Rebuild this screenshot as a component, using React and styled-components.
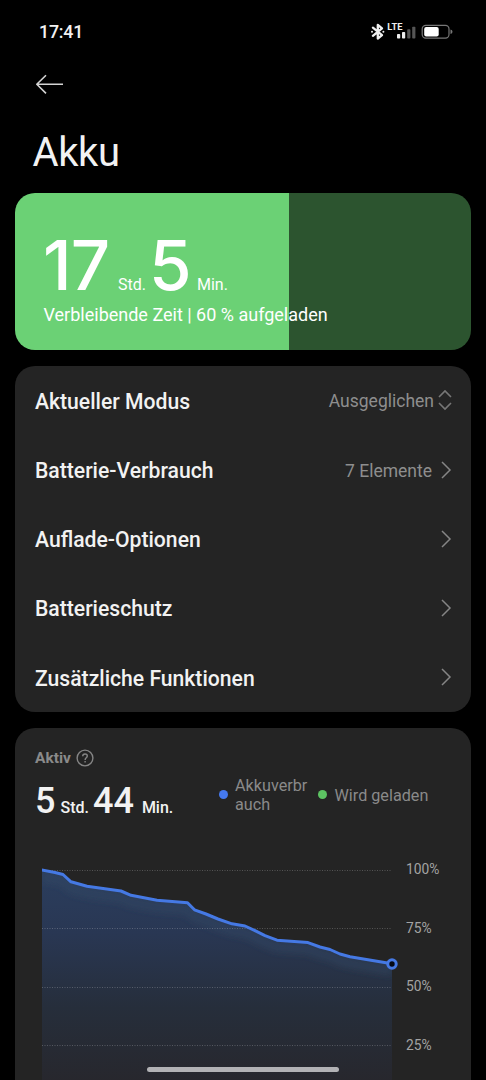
import React from "react";
import styled, { createGlobalStyle } from "styled-components";

const GlobalStyle = createGlobalStyle`
  *, *::before, *::after { box-sizing: border-box; }
  body { margin: 0; background: #000; }
`;

const Screen = styled.div`
  position: relative;
  width: 486px;
  height: 1080px;
  overflow: hidden;
  display: flex;
  flex-direction: column;
  background: #000;
  color: #f2f2f2;
  font-family: Roboto, "Liberation Sans", sans-serif;
`;

const StatusBar = styled.header`
  display: flex;
  align-items: center;
  justify-content: space-between;
  height: 64px;
  flex: none;
  padding: 0 32px 0 39px;
`;

const Clock = styled.span`
  font-size: 17.8px;
  font-weight: 500;
  line-height: 20px;
  letter-spacing: -0.2px;
`;

const StatusIcons = styled.svg`
  display: block;
  flex: none;
`;

const NavBar = styled.nav`
  display: flex;
  align-items: center;
  height: 40px;
  flex: none;
  padding-left: 35px;
`;

const BackButton = styled.button`
  display: flex;
  padding: 0;
  border: 0;
  background: none;
`;

const Title = styled.h1`
  margin: 25px 0 0 32.5px;
  height: 64px;
  flex: none;
  font-size: 40px;
  font-weight: 400;
  line-height: 48px;
  letter-spacing: -0.4px;
`;

const Cards = styled.main`
  display: flex;
  flex-direction: column;
  gap: 16px;
  padding: 0 15px;
`;

const Card = styled.section`
  flex: none;
  border-radius: 20px;
  background: #242424;
  overflow: hidden;
`;

const ChargeCard = styled(Card)`
  height: 157px;
  padding: 36px 28px 0;
  background: linear-gradient(
    to right,
    #6bd175 ${(p) => p.$level}%,
    #2c542f ${(p) => p.$level}%
  );
  color: #fff;
`;

const Duration = styled.div`
  display: flex;
  align-items: baseline;
`;

const BigNumber = styled.span`
  flex: none;
  width: ${(p) => p.$width}px;
  margin-left: ${(p) => p.$before || 0}px;
  font-family: Inter, Roboto, sans-serif;
  font-size: 69px;
  font-weight: 500;
  line-height: 72px;
  letter-spacing: -1px;
`;

const Unit = styled.span`
  font-size: 16px;
  font-weight: ${(p) => p.$weight || 400};
  margin-left: ${(p) => p.$before || 0}px;
`;

const ChargeNote = styled.p`
  margin: 2px 0 0 0.5px;
  font-size: 18px;
  line-height: 24px;
  white-space: nowrap;
`;

const MenuCard = styled(Card)`
  display: flex;
  flex-direction: column;
  height: 346px;
`;

const MenuRow = styled.div`
  display: flex;
  align-items: center;
  flex: 1;
  padding: 1.5px 19px 0 20px;
`;

const MenuLabel = styled.span`
  flex: 1;
  font-size: 21.15px;
  font-weight: 500;
`;

const MenuValue = styled.span`
  font-size: 17.5px;
  color: #8e8e8e;
  margin-right: ${(p) => p.$gap}px;
`;

const MenuIcon = styled.svg`
  display: block;
  margin-top: -2px;
`;

const UsageCard = styled(Card)`
  height: 400px;
  padding: 19px 0 0 20px;
`;

const UsageHeading = styled.div`
  display: flex;
  align-items: center;
  gap: 5.5px;
  height: 22px;
  color: #8a8a8a;
  font-size: 15.5px;
  font-weight: 700;
`;

const UsageSummary = styled.div`
  display: flex;
  height: 93px;
`;

const UsageTime = styled(Duration)`
  width: 183.5px;
  height: 44px;
  margin-top: 10px;
  white-space: nowrap;
`;

const MediumNumber = styled.span`
  font-size: 36px;
  font-weight: 500;
  line-height: 44px;
  margin-left: ${(p) => p.$before || 0}px;
`;

const Legend = styled.div`
  display: flex;
  align-items: center;
  height: 38px;
  margin-top: 7px;
`;

const LegendDot = styled.span`
  width: 9px;
  height: 9px;
  flex: none;
  border-radius: 50%;
  background: ${(p) => p.$color};
  margin: -2px 7.5px 0 0;
`;

const LegendText = styled.span`
  width: ${(p) => p.$width}px;
  font-size: 16.2px;
  line-height: 19px;
  color: #8a8a8a;
  word-break: break-all;
`;

const ChartArea = styled.div`
  display: flex;
  padding-left: 7px;
`;

const ChartLabels = styled.div`
  display: flex;
  flex-direction: column;
  margin-left: 7px;
`;

const ChartLabel = styled.span`
  height: 58.5px;
  font-size: 13.8px;
  line-height: 15px;
  color: #a3a3a3;
`;

const HomeIndicator = styled.div`
  position: absolute;
  left: 147px;
  top: 1067px;
  width: 192px;
  height: 5px;
  border-radius: 3px;
  background: #b2b2b5;
`;

const menu = [
  { label: "Aktueller Modus", value: "Ausgeglichen", picker: true },
  { label: "Batterie-Verbrauch", value: "7 Elemente" },
  { label: "Auflade-Optionen" },
  { label: "Batterieschutz" },
  { label: "Zusätzliche Funktionen" },
];

const levels = [
  [-0.5, 8], [13, 10.5], [21, 12.5], [29, 19.8], [45, 24.3], [79, 29],
  [89, 33.3], [115, 38.2], [145.5, 40.8], [152.5, 47.8], [164, 52], [176, 57],
  [190, 61.8], [203, 64], [213, 68.7], [223, 73.7], [235, 78.2], [266, 80.6],
  [278, 85], [288, 87.5], [298, 92], [308, 94.7], [350, 101.8],
];
const line = levels.map(([x, y]) => `${x},${y}`).join(" ");

function Chart() {
  return (
    <svg width="357" height="220" viewBox="0 0 357 220">
      <defs>
        <linearGradient id="fill" x1="0" y1="8" x2="0" y2="220" gradientUnits="userSpaceOnUse">
          <stop offset="0" stopColor="#2b3e5e" />
          <stop offset="0.3" stopColor="#293753" />
          <stop offset="0.65" stopColor="#262e3b" />
          <stop offset="1" stopColor="#27272d" />
        </linearGradient>
        <clipPath id="area">
          <polygon points={`0,220 ${line} 350,220`} />
        </clipPath>
        <filter id="soft" x="-10%" y="-20%" width="120%" height="150%">
          <feGaussianBlur stdDeviation="3.5" />
        </filter>
      </defs>
      <g clipPath="url(#area)">
        <rect width="351" height="220" fill="url(#fill)" />
        <polyline
          points={line}
          transform="translate(0 7)"
          fill="none"
          stroke="#304c66"
          strokeOpacity="0.45"
          strokeWidth="9"
          filter="url(#soft)"
        />
      </g>
      {[8.5, 66.5, 125.5, 183.5].map((y) => (
        <line key={y} x1="0" x2="350" y1={y} y2={y} stroke="#fff" strokeOpacity="0.22" strokeDasharray="1 1.5" />
      ))}
      <polyline points={line} fill="none" stroke="#4579e4" strokeWidth="3" strokeLinejoin="round" />
      <circle cx="350" cy="102" r="4.2" fill="#050914" stroke="#4579e4" strokeWidth="3" />
    </svg>
  );
}

function StatusGlyphs() {
  return (
    <StatusIcons width="84" height="22" viewBox="0 0 84 22">
      <g fill="none" stroke="#f0f0f0" strokeWidth="2.3" strokeLinejoin="round" strokeLinecap="round">
        <path d="M2.9 6.7 12 14.2 7.8 17.6V3.9L12 7.4 2.9 14.8" />
      </g>
      <circle cx="2" cy="10.8" r="1" fill="#eee" />
      <circle cx="13.4" cy="10.8" r="1" fill="#eee" />
      <text x="17.3" y="9" fill="#eee" fontFamily="Roboto, sans-serif" fontWeight="700" fontSize="9.3" textLength="15.2">
        LTE
      </text>
      <rect x="27" y="13" width="3.2" height="4.5" rx="0.8" fill="#eee" />
      <rect x="32" y="11" width="3.2" height="6.5" rx="0.8" fill="#eee" />
      <rect x="37.2" y="8.2" width="3.2" height="9.3" rx="0.8" fill="#555" />
      <rect x="42.2" y="5.8" width="3.2" height="11.7" rx="0.8" fill="#555" />
      <rect x="52.2" y="4.3" width="26.8" height="12.8" rx="3.6" fill="none" stroke="#777" strokeWidth="1.2" />
      <rect x="54.2" y="6.1" width="14.5" height="9.3" rx="2" fill="#fff" />
      <path d="M80.5 8.5q2 .6 2 2.3t-2 2.3z" fill="#777" />
    </StatusIcons>
  );
}

export default function App() {
  return (
    <Screen>
      <GlobalStyle />
      <StatusBar>
        <Clock>17:41</Clock>
        <StatusGlyphs />
      </StatusBar>
      <NavBar>
        <BackButton aria-label="Zurück">
          <svg width="29" height="22" viewBox="0 0 29 22" fill="none" stroke="#d4d4d4" strokeWidth="1.6">
            <path d="M28 11.3H1.8M11 2.2 1.8 11.3 11 20.4" strokeLinejoin="round" />
          </svg>
        </BackButton>
      </NavBar>
      <Title>Akku</Title>
      <Cards>
        <ChargeCard $level={60}>
          <Duration>
            <BigNumber $width={75}>17</BigNumber>
            <Unit>Std.</Unit>
            <BigNumber $width={42} $before={3}>5</BigNumber>
            <Unit $before={6}>Min.</Unit>
          </Duration>
          <ChargeNote>Verbleibende Zeit | 60 % aufgeladen</ChargeNote>
        </ChargeCard>
        <MenuCard>
          {menu.map(({ label, value, picker }) => (
            <MenuRow key={label}>
              <MenuLabel>{label}</MenuLabel>
              {value && <MenuValue $gap={picker ? 4 : 8}>{value}</MenuValue>}
              {picker ? (
                <MenuIcon width="14" height="22" viewBox="0 0 14 22" fill="none" stroke="#777" strokeWidth="1.6">
                  <path d="M1 8 7 2l6 6M1 14l6 6 6-6" />
                </MenuIcon>
              ) : (
                <MenuIcon width="12" height="18" viewBox="0 0 12 18" fill="none" stroke="#858585" strokeWidth="1.5">
                  <path d="M2 1 10 9l-8 8" />
                </MenuIcon>
              )}
            </MenuRow>
          ))}
        </MenuCard>
        <UsageCard>
          <UsageHeading>
            Aktiv
            <svg width="18" height="18" viewBox="0 0 18 18" fill="none" stroke="#858585" strokeWidth="1.4">
              <circle cx="9" cy="9" r="7.9" />
              <path d="M6.7 7.2C6.7 5.8 7.7 5 9 5s2.3.9 2.3 2.1c0 1.7-2.2 1.8-2.2 3.8M9.1 12v1.6" />
            </svg>
          </UsageHeading>
          <UsageSummary>
            <UsageTime>
              <MediumNumber>5</MediumNumber>
              <Unit $weight={500} $before={5}>Std.</Unit>
              <MediumNumber $before={4}>44</MediumNumber>
              <Unit $weight={500} $before={8}>Min.</Unit>
            </UsageTime>
            <Legend>
              <LegendDot $color="#4579ee" />
              <LegendText $width={83}>Akkuverbr auch</LegendText>
              <LegendDot $color="#5cc362" />
              <LegendText $width={110}>Wird geladen</LegendText>
            </Legend>
          </UsageSummary>
          <ChartArea>
            <Chart />
            <ChartLabels>
              {["100%", "75%", "50%", "25%"].map((t) => (
                <ChartLabel key={t}>{t}</ChartLabel>
              ))}
            </ChartLabels>
          </ChartArea>
        </UsageCard>
      </Cards>
      <HomeIndicator />
    </Screen>
  );
}
